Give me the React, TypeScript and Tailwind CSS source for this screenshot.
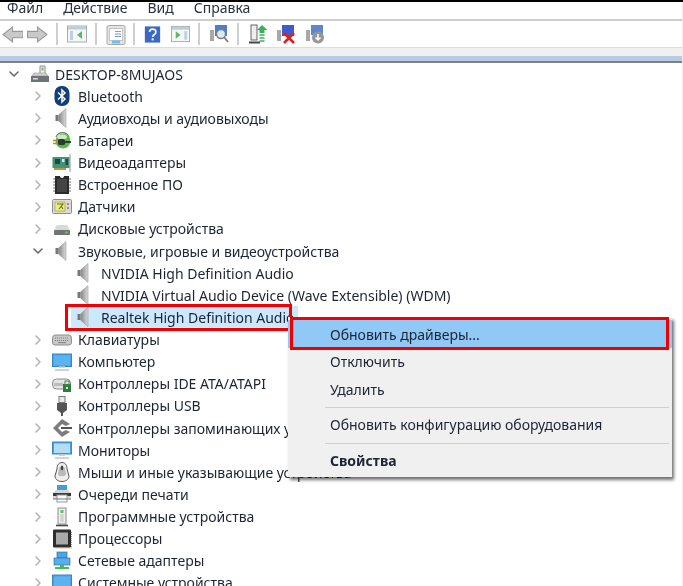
import React from "react";
import { ChevronRight, ChevronDown } from "lucide-react";

const Svg = ({ children, w = 20, h = 20 }: { children: React.ReactNode; w?: number; h?: number }) => (
  <svg width={w} height={h} viewBox="0 0 20 20" className="shrink-0">{children}</svg>
);

const Speaker = () => (
  <Svg>
    <defs>
      <linearGradient id="spk" x1="0" x2="1" y1="0" y2="0">
        <stop offset="0" stopColor="#858585" />
        <stop offset="1" stopColor="#dcdcdc" />
      </linearGradient>
    </defs>
    <rect x="3.5" y="7" width="3" height="6" fill="#777" />
    <path d="M6.5 7 L14 0.5 V19.5 L6.5 13 Z" fill="url(#spk)" stroke="#9a9a9a" strokeWidth="0.6" />
  </Svg>
);
const Bluetooth = () => (
  <Svg>
    <rect x="2.5" y="0" width="15" height="20" rx="7" fill="#123f7a" />
    <path d="M6 6.5 L13 13 L10 16 V4 L13 7 L6 13.5" fill="none" stroke="#fff" strokeWidth="1.5" />
  </Svg>
);
const Battery = () => (
  <Svg>
    <path d="M4 7 A7 7 0 0 1 17 7" fill="none" stroke="#777" strokeWidth="1.2" />
    <circle cx="11" cy="11" r="7.5" fill="#57b84a" />
    <ellipse cx="10" cy="7" rx="5" ry="2.4" fill="#c9ecc0" />
    <rect x="6" y="9" width="7" height="6" rx="1.5" fill="#2c3a35" />
    <path d="M1 10.5 H6 M1 13.5 H6" stroke="#b58c2d" strokeWidth="1.3" />
    <path d="M13 12 H19" stroke="#222" strokeWidth="1.6" />
  </Svg>
);
const Video = () => (
  <Svg>
    <path d="M18 1 V19" stroke="#b9b9b9" strokeWidth="1.5" />
    <rect x="0.5" y="4" width="17" height="11" fill="#43917a" />
    <rect x="3" y="6" width="5" height="5" fill="#1f4a3d" />
    <rect x="10" y="6" width="2.5" height="3" fill="#cfe6de" />
    <rect x="13.5" y="6" width="2.5" height="6" fill="#1f4a3d" />
    <path d="M2 15 H14 V17 H2 Z" fill="#b89a3c" />
  </Svg>
);
const Firmware = () => (
  <Svg>
    <path d="M3 4 H1 M3 7 H1 M3 10 H1 M3 13 H1 M3 16 H1 M17 4 H19 M17 7 H19 M17 10 H19 M17 13 H19 M17 16 H19" stroke="#777" strokeWidth="1.2" />
    <path d="M3 1 H8 A2 2 0 0 0 12 1 H17 V19 H3 Z" fill="#2b2b2b" />
    <rect x="5" y="4" width="10" height="13" fill="#444" />
  </Svg>
);
const Sensor = () => (
  <Svg>
    <rect x="0.5" y="2.5" width="19" height="14" rx="1" fill="#dcdcd2" stroke="#8d8d8d" />
    <rect x="3" y="5" width="10" height="9" fill="#f0ef73" stroke="#777" strokeWidth="0.5" />
    <path d="M5 7 H11 L7 12 M9 9 L11 12" fill="none" stroke="#55702a" strokeWidth="1.1" />
    <circle cx="16" cy="7" r="1" fill="#777" /><circle cx="16" cy="11" r="1" fill="#777" />
  </Svg>
);
const Disk = () => (
  <Svg>
    <path d="M5 6 H15 L18 11 H2 Z" fill="#d9d9d9" />
    <rect x="2" y="11" width="16" height="5" rx="1" fill="#6f7572" />
    <rect x="13" y="12.5" width="3" height="2" fill="#56c65a" />
  </Svg>
);
const Keyboard = () => (
  <Svg>
    <path d="M3 5 H17 Q19.5 5 19.5 9 V12 Q19.5 15 17 15 H3 Q0.5 15 0.5 12 V9 Q0.5 5 3 5 Z" fill="#c8c8c8" stroke="#8d8d8d" />
    <path d="M3 8 H17 M3 10.5 H17" stroke="#7d7d7d" strokeWidth="1.2" strokeDasharray="1 1" />
    <rect x="6" y="12" width="8" height="1.2" fill="#8d8d8d" />
  </Svg>
);
const Monitor = ({ light }: { light?: boolean }) => (
  <Svg>
    <rect x="0.5" y="2" width="19" height={light ? 12 : 12.5} fill="#4aa5e8" stroke="#3b86bd" />
    <rect x="2" y="3.5" width="16" height="9.5" fill={light ? "#b3dcf7" : "#5ab4f2"} />
    <path d="M7 15 H13 M3 18 H17" stroke="#c5c5c5" strokeWidth="1.5" />
  </Svg>
);
const Ide = () => (
  <Svg>
    <rect x="0.5" y="5" width="18" height="10" rx="4" fill="#e4e4e4" stroke="#8d8d8d" />
    <rect x="2" y="9" width="9" height="3" fill="#bbb" />
    <rect x="11" y="10" width="8" height="8" fill="#2f7a3d" />
    <rect x="13" y="7" width="4" height="4" fill="none" stroke="#4b8a55" />
    <rect x="14" y="13" width="2" height="2" fill="#dff3c9" />
  </Svg>
);
const Usb = () => (
  <Svg>
    <rect x="7" y="0.5" width="6" height="6" fill="#e8e8e8" stroke="#777" />
    <path d="M5 7 H15 V14 L11 17 V20 H9 V17 L5 14 Z" fill="#555" />
  </Svg>
);
const Storage = () => (
  <Svg>
    <path d="M10 1 L18 6 L14 8 L10 6 L6 10 L10 14 L14 12 L18 14 L10 19 L1 10 Z" fill="#7c7c7c" />
    <rect x="9" y="9" width="11" height="2" fill="#555" />
  </Svg>
);
const Mouse = () => (
  <Svg>
    <path d="M10 0.5 C14 0.5 15 4 15 7 L17 14 C17 18 13 19.5 10 19.5 C7 19.5 3 18 3 14 L5 7 C5 4 6 0.5 10 0.5 Z" fill="#eee" stroke="#555" />
    <path d="M7 7 C7 4 13 4 13 7 L14 12 C14 15 6 15 6 12 Z" fill="#b9b9b9" />
    <ellipse cx="10" cy="6" rx="1.3" ry="2.4" fill="#444" />
  </Svg>
);
const Printer = () => (
  <Svg>
    <rect x="5" y="1" width="10" height="5" fill="#3fa0d8" />
    <path d="M4 6 H16 L19 9 V15 H1 V9 Z" fill="#d5d5d5" />
    <rect x="1" y="9" width="18" height="3" fill="#3a3a3a" />
    <rect x="5" y="11" width="10" height="7" fill="#fafafa" stroke="#999" />
    <rect x="1" y="14.5" width="18" height="1" fill="#777" />
  </Svg>
);
const Software = () => (
  <Svg>
    <rect x="6" y="1" width="8" height="16" fill="#ededed" stroke="#8d8d8d" />
    <rect x="8.5" y="3" width="3" height="3" fill="#5ec45f" />
    <rect x="8.5" y="7" width="3" height="8" fill="#cfcfcf" />
    <path d="M4 18.5 H16" stroke="#444" strokeWidth="1.6" />
  </Svg>
);
const Cpu = () => (
  <Svg>
    <rect x="1" y="0.5" width="18" height="18" rx="1" fill="#2d2d2d" />
    <rect x="4" y="3.5" width="12" height="12" fill="#a9a9a9" />
    <path d="M19.5 3 V19 H3" fill="none" stroke="#c79a2e" strokeWidth="1" strokeDasharray="1 1" />
  </Svg>
);
const Net = () => (
  <Svg>
    <rect x="5" y="1" width="10" height="6" fill="#4aa5e8" stroke="#33709f" strokeWidth="0.7" />
    <rect x="2" y="7" width="16" height="7" fill="#58aeea" stroke="#33709f" strokeWidth="0.7" />
    <path d="M8 14 H12 V16 H8 Z M3 16 H17 V18 H3 Z" fill="#3ec04a" />
  </Svg>
);
const Computer = () => (
  <Svg>
    <path d="M10 2 H15 V10 H10 Z" fill="#f2f2f2" stroke="#8d8d8d" />
    <rect x="11.5" y="3.5" width="2" height="3" fill="#5ec45f" />
    <path d="M4 9 H16 L18 12 H2 Z" fill="#cfcfcf" stroke="#8d8d8d" strokeWidth="0.5" />
    <rect x="1" y="12" width="18" height="6" fill="#6d7478" />
    <rect x="3" y="14" width="5" height="1.5" fill="#d5d5d5" />
  </Svg>
);

type Row = { t: string; i: React.ReactNode; open?: boolean };
const rowsA: Row[] = [
  { t: "Bluetooth", i: <Bluetooth /> },
  { t: "Аудиовходы и аудиовыходы", i: <Speaker /> },
  { t: "Батареи", i: <Battery /> },
  { t: "Видеоадаптеры", i: <Video /> },
  { t: "Встроенное ПО", i: <Firmware /> },
  { t: "Датчики", i: <Sensor /> },
  { t: "Дисковые устройства", i: <Disk /> },
  { t: "Звуковые, игровые и видеоустройства", i: <Speaker />, open: true },
];
const rowsB: Row[] = [
  { t: "Клавиатуры", i: <Keyboard /> },
  { t: "Компьютер", i: <Monitor /> },
  { t: "Контроллеры IDE ATA/ATAPI", i: <Ide /> },
  { t: "Контроллеры USB", i: <Usb /> },
  { t: "Контроллеры запоминающих устройств", i: <Storage /> },
  { t: "Мониторы", i: <Monitor light /> },
  { t: "Мыши и иные указывающие устройства", i: <Mouse /> },
  { t: "Очереди печати", i: <Printer /> },
  { t: "Программные устройства", i: <Software /> },
  { t: "Процессоры", i: <Cpu /> },
  { t: "Сетевые адаптеры", i: <Net /> },
  { t: "Системные устройства", i: <Monitor /> },
];

const Branch = ({ r }: { r: Row }) => (
  <div className="flex h-[22.13px] items-center whitespace-nowrap">
    <div className="flex w-[52px] justify-end pr-[6px]">
      {r.open ? (
        <ChevronDown size={16} strokeWidth={2.4} className="text-[#6a6a6a]" />
      ) : (
        <ChevronRight size={16} strokeWidth={2.4} className="text-[#b4b4b4]" />
      )}
    </div>
    <div className="flex w-[26px] justify-start">{r.i}</div>
    <span>{r.t}</span>
  </div>
);

const Leaf = ({ t, sel }: { t: string; sel?: boolean }) => (
  <div className="flex h-[22.13px] items-center whitespace-nowrap pl-[71px]">
    <div className={`flex h-full items-center pl-[3px] ${sel ? "w-[227px] bg-[#cce8ff]" : ""}`}>
      <div className="flex w-[27px] justify-start"><Speaker /></div>
      <span>{t}</span>
    </div>
  </div>
);

const ToolIcon = ({ k }: { k: string }) => {
  switch (k) {
    case "back":
      return <Svg w={21} h={21}><path d="M1 10 L10 3 V7 H20 V13 H10 V17 Z" fill="#c9c9c9" stroke="#999" /></Svg>;
    case "fwd":
      return <Svg w={21} h={21}><path d="M19 10 L10 3 V7 H0.5 V13 H10 V17 Z" fill="#c9c9c9" stroke="#999" /></Svg>;
    case "tree":
      return <Svg w={20} h={20}><rect x="0.5" y="2" width="19" height="16" fill="#f6f6f6" stroke="#a3adb6" /><rect x="1" y="2.5" width="18" height="3" fill="#c2ccd5" /><rect x="3" y="7" width="3" height="9" fill="#bcd0e2" /><path d="M15 7 L10 11 L15 15 Z" fill="#5cb968" /></Svg>;
    case "doc":
      return <Svg w={20} h={21}><rect x="1" y="1" width="18" height="19" rx="1.5" fill="#e4e4e4" stroke="#a8a8a8" /><rect x="3.5" y="4" width="13" height="12" fill="#fff" stroke="#c4c4c4" /><path d="M9 7 H15 M9 9.5 H15 M9 12 H15" stroke="#7e9cbc" /><rect x="6" y="16" width="8" height="3" fill="#6bc0ec" /></Svg>;
    case "help":
      return <Svg w={17} h={21}><rect x="1" y="0.5" width="18" height="19" fill="#3a68c4" /><path d="M6.5 7 C6.5 2.5 14 2.5 14 7 C14 10 10.2 10 10.2 13" fill="none" stroke="#f2f5ff" strokeWidth="2" /><rect x="9" y="14.5" width="2.4" height="2.4" fill="#f2f5ff" /></Svg>;
    case "panel":
      return <Svg w={19} h={20}><rect x="0.5" y="2" width="19" height="16" fill="#f6f6f6" stroke="#a3adb6" /><rect x="1" y="2.5" width="18" height="3" fill="#c2ccd5" /><rect x="14" y="7" width="3" height="9" fill="#bcd0e2" /><path d="M5 7 L10 11 L5 15 Z" fill="#5cb968" /></Svg>;
    case "scan":
      return <Svg w={20} h={20}><rect x="1" y="6" width="4" height="11" fill="#a8a8a8" /><rect x="6" y="1" width="12" height="11" fill="#4f7ccb" /><circle cx="12" cy="10" r="4.5" fill="#dbe9f6" stroke="#808080" strokeWidth="1.5" /><path d="M15 13 L19 18" stroke="#808080" strokeWidth="2" /></Svg>;
    case "update":
      return <Svg w={20} h={20}><rect x="3" y="1" width="6" height="15" fill="#eee" stroke="#666" /><path d="M1 18.5 H12" stroke="#444" strokeWidth="2" /><path d="M9 6 L14 1 L19.5 6 H16.5 V9 H11.5 V6 Z" fill="#3db05a" /><path d="M11.5 11 H16.5 M11.5 14 H16.5 M11.5 17 H16.5" stroke="#3db05a" strokeWidth="1.6" /></Svg>;
    case "remove":
      return <Svg w={20} h={20}><rect x="1" y="6" width="4" height="11" fill="#a8a8a8" /><rect x="6" y="1" width="12" height="11" fill="#3c5dcb" /><path d="M8 9 L18 19 M18 9 L8 19" stroke="#e02020" strokeWidth="2.6" /></Svg>;
    default:
      return <Svg w={20} h={20}><rect x="1" y="6" width="4" height="11" fill="#a8a8a8" /><rect x="6" y="1" width="12" height="10" fill="#5f88cb" /><circle cx="13" cy="13.5" r="6" fill="#969696" /><path d="M13 10 V16 M10.5 13.5 L13 16 L15.5 13.5" fill="none" stroke="#fff" strokeWidth="1.5" /></Svg>;
  }
};

const Sep = () => <div className="ml-[8px] mr-[9px] h-[22px] w-[2px] bg-[#cfcfcf]" />;

const MenuItem = ({ t, bold, active, h }: { t: string; bold?: boolean; active?: boolean; h: string }) => (
  <div className={`flex items-center pl-[42px] ${h} ${active ? "bg-[#90c8f6]" : ""} ${bold ? "font-bold" : ""}`}>{t}</div>
);

const MenuSep = () => <div className="mb-[1px] ml-[37px] mr-[3px] mt-[4px] h-[1px] bg-[#cfcfcf]" />;

export default function App() {
  return (
    <div className="relative h-[586px] w-[683px] overflow-hidden bg-white font-['Noto_Sans',sans-serif] text-[14px] text-[#1d2433] blur-[0.45px]">
      <div className="h-[2px] bg-black" />
      <div className="flex h-[17px] items-center gap-[20px] overflow-hidden pb-[7px] pl-[7px] text-[#2a3040]">
        <span>Файл</span><span>Действие</span><span>Вид</span><span>Справка</span>
      </div>
      <div className="h-[2px] bg-[#cdcdcd]" />
      <div className="flex h-[26px] items-center pl-[2px]">
        <div className="flex w-[25px]"><ToolIcon k="back" /></div>
        <div className="flex w-[21px]"><ToolIcon k="fwd" /></div>
        <Sep />
        <div className="flex w-[20px]"><ToolIcon k="tree" /></div>
        <Sep />
        <div className="flex w-[19px]"><ToolIcon k="doc" /></div>
        <Sep />
        <div className="flex w-[18px]"><ToolIcon k="help" /></div>
        <div className="ml-[9px] flex w-[19px]"><ToolIcon k="panel" /></div>
        <Sep />
        <div className="flex w-[20px]"><ToolIcon k="scan" /></div>
        <Sep />
        <div className="flex w-[20px]"><ToolIcon k="update" /></div>
        <div className="ml-[8px] flex w-[20px]"><ToolIcon k="remove" /></div>
        <div className="ml-[9px] flex w-[20px]"><ToolIcon k="add" /></div>
      </div>
      <div className="h-[1px] bg-[#dcdcdc]" />
      <div className="h-[8px] bg-[#f0f0f0]" />
      <div className="h-[5px] bg-[#b4cde4]" />
      <div className="h-[2px] bg-[#808080]" />

      <div className="flex h-[22.13px] items-center whitespace-nowrap">
        <div className="flex w-[30px] justify-start pl-[6px]">
          <ChevronDown size={16} strokeWidth={2.4} className="text-[#6a6a6a]" />
        </div>
        <div className="flex w-[25px]"><Computer /></div>
        <span>DESKTOP-8MUJAOS</span>
      </div>
      {rowsA.map((r) => <Branch key={r.t} r={r} />)}
      <Leaf t="NVIDIA High Definition Audio" />
      <Leaf t="NVIDIA Virtual Audio Device (Wave Extensible) (WDM)" />
      <Leaf t="Realtek High Definition Audio" sel />
      {rowsB.map((r) => <Branch key={r.t} r={r} />)}

      {/* red marker around the selected row */}
      <div className="absolute left-[65px] top-[304px] h-[27px] w-[227px] border-[3px] border-[#f00000]" />

      {/* context menu */}
      <div className="absolute left-[288px] top-[317px] w-[384px] bg-[#f0f0f0] pb-[2px] pt-[3px] shadow-[2px_3px_3px_rgba(0,0,0,0.55)]">
        <MenuItem t="Обновить драйверы..." active h="h-[28px]" />
        <MenuItem t="Отключить" h="h-[27px]" />
        <MenuItem t="Удалить" h="h-[28px]" />
        <MenuSep />
        <MenuItem t="Обновить конфигурацию оборудования" h="h-[30px]" />
        <MenuSep />
        <MenuItem t="Свойства" bold h="h-[30px]" />
      </div>
      <div className="absolute left-[290px] top-[317px] h-[33px] w-[379px] border-[3px] border-[#f00000]" />
      <div className="absolute right-0 top-[2px] h-[584px] w-[1px] bg-[#ececec]" />
    </div>
  );
}
